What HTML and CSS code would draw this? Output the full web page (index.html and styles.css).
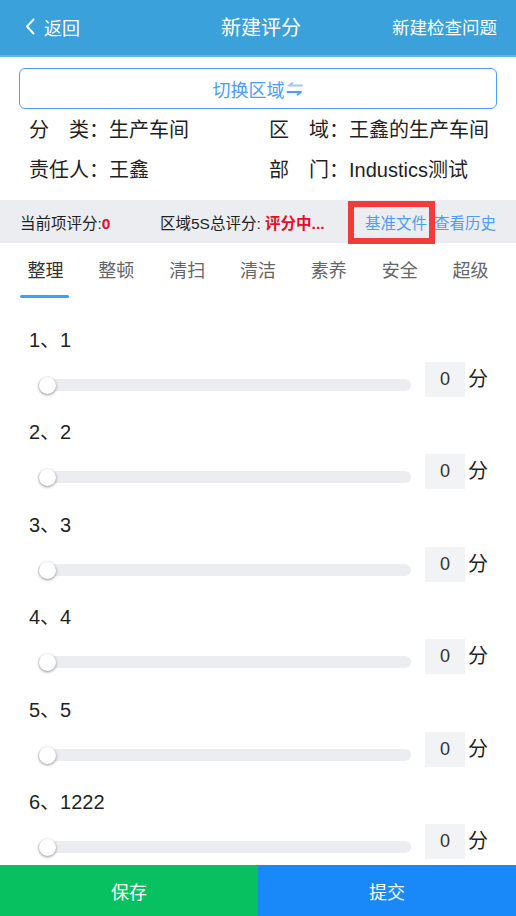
FILE: index.html
```html
<!DOCTYPE html>
<html lang="zh-CN">
<head>
    <meta charset="UTF-8">
    <meta name="viewport" content="width=device-width, initial-scale=1.0">
    <title>新建评分</title>
    <link rel="stylesheet" href="styles.css">
</head>
<body>
    <div class="nav-bar">
        <div class="nav-left">
            <svg class="nav-arrow" width="10" height="17" viewBox="0 0 10 17">
                <path d="M8.5 1.5 L2 8.5 L8.5 15.5" fill="none" stroke="#fff" stroke-width="2" stroke-linecap="round" stroke-linejoin="round"/>
            </svg>
            <span>返回</span>
        </div>
        <div class="nav-title">新建评分</div>
        <div class="nav-right">新建检查问题</div>
    </div>

    <button class="switch-button">
        切换区域<svg class="switch-icon" width="18" height="14" viewBox="0 0 18 14">
            <path d="M3 3.5 H16 M3 3.5 L6.5 0.8" fill="none" stroke="#9fc8f6" stroke-width="1.8" stroke-linecap="round"/>
            <path d="M1.5 10 H15 M15 10 L11.5 12.8" fill="none" stroke="#4a9ef5" stroke-width="1.8" stroke-linecap="round"/>
        </svg>
    </button>

    <div class="info-grid">
        <div>分　类：生产车间</div>
        <div>区　域：王鑫的生产车间</div>
        <div>责任人：王鑫</div>
        <div>部　门：Industics测试</div>
    </div>

    <div class="score-bar">
        <span class="score-current">当前项评分:<b class="red">0</b></span>
        <span class="score-total">区域5S总评分: <b class="red">评分中...</b></span>
        <span class="link marked">基准文件</span>
        <span class="link">查看历史</span>
    </div>

    <div class="tabs">
        <div class="tab active">整理</div>
        <div class="tab">整顿</div>
        <div class="tab">清扫</div>
        <div class="tab">清洁</div>
        <div class="tab">素养</div>
        <div class="tab">安全</div>
        <div class="tab">超级</div>
    </div>

    <div class="item-list">
        <div class="item">
            <div class="item-title">1、1</div>
            <div class="item-row">
                <div class="slider"><span class="knob"></span></div>
                <div class="score-input">0</div>
                <span class="unit">分</span>
            </div>
        </div>
        <div class="item">
            <div class="item-title">2、2</div>
            <div class="item-row">
                <div class="slider"><span class="knob"></span></div>
                <div class="score-input">0</div>
                <span class="unit">分</span>
            </div>
        </div>
        <div class="item">
            <div class="item-title">3、3</div>
            <div class="item-row">
                <div class="slider"><span class="knob"></span></div>
                <div class="score-input">0</div>
                <span class="unit">分</span>
            </div>
        </div>
        <div class="item">
            <div class="item-title">4、4</div>
            <div class="item-row">
                <div class="slider"><span class="knob"></span></div>
                <div class="score-input">0</div>
                <span class="unit">分</span>
            </div>
        </div>
        <div class="item">
            <div class="item-title">5、5</div>
            <div class="item-row">
                <div class="slider"><span class="knob"></span></div>
                <div class="score-input">0</div>
                <span class="unit">分</span>
            </div>
        </div>
        <div class="item">
            <div class="item-title">6、1222</div>
            <div class="item-row">
                <div class="slider"><span class="knob"></span></div>
                <div class="score-input">0</div>
                <span class="unit">分</span>
            </div>
        </div>
    </div>

    <div class="footer">
        <button class="btn-save">保存</button>
        <button class="btn-submit">提交</button>
    </div>
</body>
</html>
```

FILE: styles.css
```css
* {
    margin: 0;
    padding: 0;
    box-sizing: border-box;
}

body {
    font-family: 'Liberation Sans', 'Noto Sans CJK SC', sans-serif;
    color: #1f1f1f;
    background: #fff;
    padding-bottom: 60px;
}

.nav-bar {
    display: grid;
    grid-template-columns: 1fr auto 1fr;
    align-items: center;
    height: 57px;
    padding: 0 19px 2px 25px;
    background: #3aa1db;
    border-bottom: 2px solid #62b4e2;
    color: #fff;
}

.nav-left {
    display: flex;
    align-items: center;
    gap: 9px;
    font-size: 18px;
}

.nav-title {
    font-size: 20px;
}

.nav-right {
    justify-self: end;
    font-size: 17.5px;
}

.switch-button {
    display: flex;
    align-items: center;
    justify-content: center;
    width: 478px;
    height: 41px;
    margin: 11px 19px 0;
    border: 1px solid #4c9ff7;
    border-radius: 6px;
    background: #fff;
    color: #4a9ef5;
    font-family: inherit;
    font-size: 18px;
}

.switch-icon {
    margin-left: 1px;
}

.info-grid {
    display: grid;
    grid-template-columns: 240px 240px;
    padding: 1px 0 10px 29px;
    font-size: 20px;
    line-height: 40px;
}

.score-bar {
    display: flex;
    align-items: center;
    height: 43px;
    padding-left: 20px;
    background: #ebedf0;
    font-size: 15.5px;
}

.score-current {
    width: 140px;
}

.score-total {
    width: 205px;
}

.red {
    color: #ee0a24;
}

.link {
    color: #4a9ef5;
}

.marked {
    position: relative;
    margin-right: 7px;
}

.marked::after {
    content: '';
    position: absolute;
    left: -17px;
    top: -10px;
    right: -8px;
    bottom: -11px;
    border: 6px solid #f53a3a;
}

.tabs {
    display: flex;
    height: 57px;
    padding: 0 10px;
}

.tab {
    position: relative;
    flex: 1;
    text-align: center;
    line-height: 57px;
    font-size: 18px;
    color: #646566;
}

.tab.active {
    color: #323233;
}

.tab.active::after {
    content: '';
    position: absolute;
    left: 50%;
    bottom: 2px;
    width: 49px;
    height: 3px;
    margin-left: -25px;
    border-radius: 2px;
    background: #409eff;
}

.item-list {
    padding-top: 25px;
}

.item {
    padding: 0 0 20.4px 29px;
}

.item-title {
    font-size: 20px;
    line-height: 30px;
}

.item-row {
    display: flex;
    align-items: flex-start;
    margin-top: 7px;
}

.slider {
    position: relative;
    width: 373px;
    height: 12px;
    margin: 17px 14px 0 9px;
    border-radius: 6px;
    background: #ebedf0;
}

.knob {
    position: absolute;
    left: 1px;
    top: -2px;
    width: 17px;
    height: 17px;
    border-radius: 50%;
    background: #fff;
    box-shadow: 0 1px 3px rgba(0, 0, 0, 0.45);
}

.score-input {
    width: 40px;
    height: 35px;
    line-height: 35px;
    text-align: center;
    background: #f2f3f5;
    color: #323233;
    font-size: 18px;
}

.unit {
    margin-left: 3px;
    font-size: 20px;
    line-height: 35px;
}

.footer {
    position: fixed;
    left: 0;
    bottom: 0;
    display: flex;
    width: 100%;
    height: 51px;
}

.footer button {
    flex: 1;
    border: none;
    color: #fff;
    font-family: inherit;
    font-size: 18px;
}

.btn-save {
    background: #07c160;
}

.btn-submit {
    background: #1989fa;
}
```
